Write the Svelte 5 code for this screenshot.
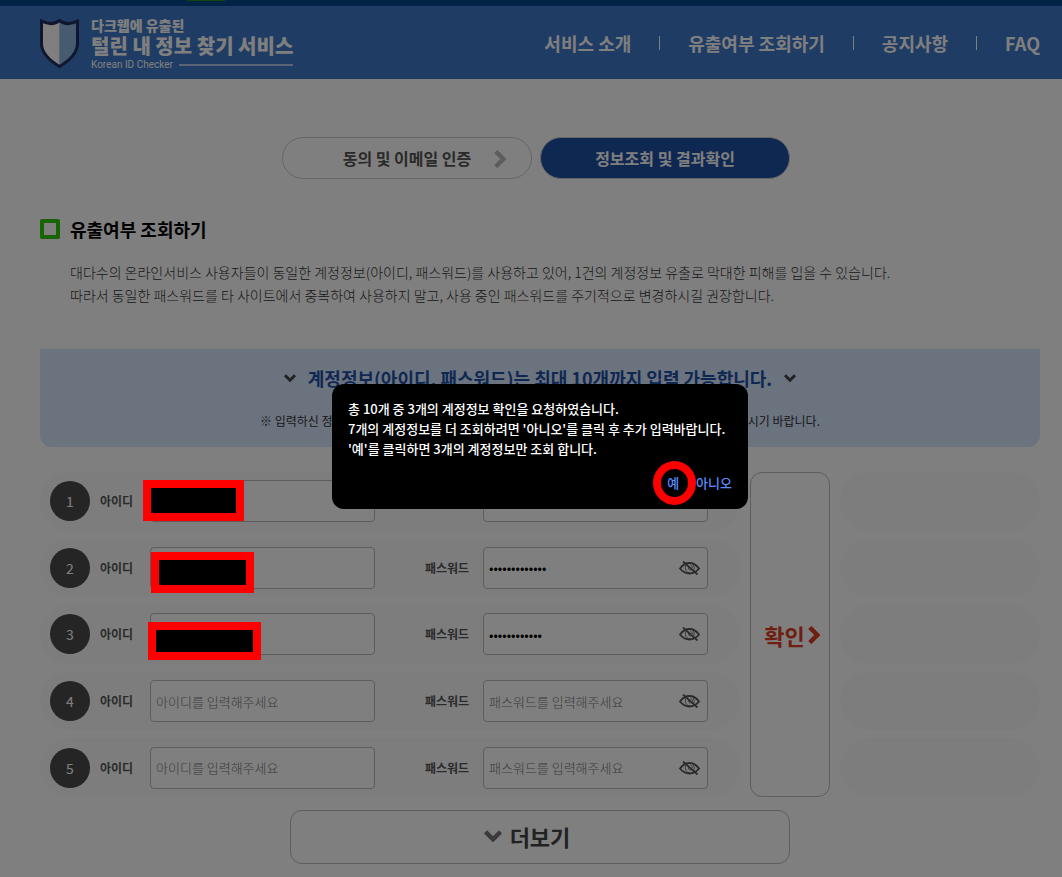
<script lang="ts">
    interface Account {
        no: number;
        id: string;
        password: string;
    }

    interface Mark {
        x: number;
        y: number;
        width: number;
        height: number;
    }

    const menu = ['서비스 소개', '유출여부 조회하기', '공지사항', 'FAQ'];

    let accounts: Account[] = $state([
        { no: 1, id: '', password: '' },
        { no: 2, id: '', password: 'abcdefghijklm' },
        { no: 3, id: '', password: 'abcdefghijkl' },
        { no: 4, id: '', password: '' },
        { no: 5, id: '', password: '' }
    ]);

    let shown: Record<number, boolean> = $state({});
    let dialogOpen = $state(true);

    // masks over the personal ids, measured from the form's top left corner
    const marks: Mark[] = [
        { x: 103, y: 8, width: 101, height: 41 },
        { x: 111, y: 80, width: 103, height: 41 },
        { x: 108, y: 150, width: 113, height: 38 }
    ];
</script>

{#snippet chevron(name: string)}
    <svg class="chevron {name}" viewBox="0 0 12 8" aria-hidden="true">
        <path d="M1 1.2 L6 6.2 L11 1.2" />
    </svg>
{/snippet}

<div class="page">
    <div class="topbar"><span class="topbar-tab"></span></div>
    <header>
        <a class="logo" href="#home">
            <svg class="shield" viewBox="0 0 39 49" aria-hidden="true">
                <path class="right" d="M19.500 2 Q28 8 37 3 V25 Q36 38 19.500 47 Z" />
                <path class="left" d="M19.500 2 Q11 8 2 3 V25 Q3 38 19.500 47 Z" />
                <path class="edge" d="M1.500 2 Q12 7.500 19.500 1.500 Q27 7.500 37.500 2 V25 Q37 37 19.500 47.500 Q2 37 1.500 25 Z" />
            </svg>
            <span class="logo-text">
                <span class="logo-small">다크웹에 유출된</span>
                <span class="logo-big">털린 내 정보 찾기 서비스</span>
                <span class="logo-en">Korean ID Checker</span>
            </span>
        </a>
        <nav>
            {#each menu as item}
                <a href="#menu">{item}</a>
            {/each}
        </nav>
    </header>

    <main>
        <div class="steps">
            <button type="button" class="step">
                동의 및 이메일 인증
                {@render chevron('next')}
            </button>
            <button type="button" class="step current">정보조회 및 결과확인</button>
        </div>

        <h1>유출여부 조회하기</h1>
        <p class="desc">
            대다수의 온라인서비스 사용자들이 동일한 계정정보(아이디, 패스워드)를 사용하고 있어, 1건의 계정정보 유출로 막대한 피해를 입을 수 있습니다.<br />
            따라서 동일한 패스워드를 타 사이트에서 중복하여 사용하지 말고, 사용 중인 패스워드를 주기적으로 변경하시길 권장합니다.
        </p>

        <section class="notice">
            <h2>
                {@render chevron('small')}
                계정정보(아이디, 패스워드)는 최대 10개까지 입력 가능합니다.
                {@render chevron('small')}
            </h2>
            <p><span>※ 입력하신 정보</span><span>하시기 바랍니다.</span></p>
        </section>

        <form onsubmit={(e) => e.preventDefault()}>
            <div class="rows">
                {#each accounts as account (account.no)}
                    <div class="row">
                        <span class="no">{account.no}</span>
                        <label class="id-label" for="id-{account.no}">아이디</label>
                        <input
                            id="id-{account.no}"
                            type="text"
                            placeholder={account.no > 3 ? '아이디를 입력해주세요' : ''}
                            bind:value={account.id}
                        />
                        <label class="pw-label" for="pw-{account.no}">패스워드</label>
                        <div class="pw">
                            <input
                                id="pw-{account.no}"
                                type={shown[account.no] ? 'text' : 'password'}
                                placeholder={account.no > 3 ? '패스워드를 입력해주세요' : ''}
                                bind:value={account.password}
                            />
                            <button
                                type="button"
                                class="eye"
                                aria-label="패스워드 표시"
                                onclick={() => (shown[account.no] = !shown[account.no])}
                            >
                                <svg viewBox="0 0 21 14" aria-hidden="true">
                                    <path d="M1 7.500 Q5 2 10.500 2 Q16 2 20 7.500 Q16 12.500 10.500 12.500 Q5 12.500 1 7.500 Z" />
                                    <path class="iris" d="M7 4 Q5.500 7 7 9.500 Q8.500 12 11 12 M9.500 6 Q9 8.500 11.500 9.500 M11.500 4 Q13.500 5 13.500 7 M14 3.500 Q15.800 6 15 9" />
                                    <path d="M4 0.500 L18.500 13.500" />
                                </svg>
                            </button>
                        </div>
                    </div>
                {/each}
            </div>
            <button type="submit" class="confirm">
                확인
                {@render chevron('go')}
            </button>
            <div class="rows">
                {#each accounts as account (account.no)}
                    <div class="result"></div>
                {/each}
            </div>

            {#each marks as mark}
                <span
                    class="mark"
                    style="left: {mark.x}px; top: {mark.y}px; width: {mark.width}px; height: {mark.height}px"
                ></span>
            {/each}
        </form>

        <button type="button" class="more">
            {@render chevron('large')}
            더보기
        </button>

        {#if dialogOpen}
            <div class="dialog" role="alertdialog" aria-modal="true">
                <p>
                    총 10개 중 3개의 계정정보 확인을 요청하였습니다.<br />
                    7개의 계정정보를 더 조회하려면 '아니오'를 클릭 후 추가 입력바랍니다.<br />
                    '예'를 클릭하면 3개의 계정정보만 조회 합니다.
                </p>
                <div class="answers">
                    <button type="button" class="yes" onclick={() => (dialogOpen = false)}>예</button>
                    <button type="button" onclick={() => (dialogOpen = false)}>아니오</button>
                </div>
            </div>
        {/if}
    </main>

    {#if dialogOpen}
        <div class="backdrop"></div>
    {/if}
</div>

<style>
    :global(body) {
        margin: 0;
        background: #fff;
    }

    .page,
    .page button,
    .page input {
        font-family: "Noto Sans CJK KR", "Noto Sans", sans-serif;
    }

    .page {
        position: relative;
        min-height: 100vh;
        color: #000;
    }

    .page *,
    .page *::before,
    .page *::after {
        box-sizing: border-box;
    }

    button {
        padding: 0;
        border: 0;
        background: none;
        cursor: pointer;
    }

    .backdrop {
        position: fixed;
        inset: 0;
        background: rgba(0, 0, 0, 0.5);
        z-index: 1;
    }

    .topbar {
        height: 6px;
        padding-left: 187px;
        background: #00468c;
    }

    .topbar-tab {
        display: block;
        width: 38px;
        height: 1px;
        background: #1e8c1e;
    }

    header {
        display: flex;
        justify-content: space-between;
        align-items: center;
        height: 73px;
        padding: 0 22px 0 40px;
        background: #3e78c8;
    }

    .logo {
        display: flex;
        align-items: center;
        gap: 12px;
        margin-top: 2px;
        color: #fff;
        text-decoration: none;
    }

    .shield {
        width: 39px;
        height: 49px;
    }

    .shield .left {
        fill: #fff;
    }

    .shield .right {
        fill: #8cb4e0;
    }

    .shield .edge {
        fill: none;
        stroke: #1e2d5a;
        stroke-width: 3;
    }

    .logo-text {
        display: flex;
        flex-direction: column;
        font-weight: 900;
    }

    .logo-small {
        font-size: 14px;
        line-height: 18px;
    }

    .logo-big {
        font-size: 20px;
        line-height: 24px;
    }

    .logo-en {
        display: flex;
        align-items: center;
        gap: 6px;
        font: 10px/14px Roboto, sans-serif;
    }

    .logo-en::after {
        content: '';
        flex: 1;
        height: 2px;
        background: #b4c8e8;
    }

    nav {
        display: flex;
    }

    nav a {
        display: flex;
        align-items: center;
        color: #fff;
        font-size: 18px;
        font-weight: 700;
        line-height: 26px;
        text-decoration: none;
    }

    nav a + a::before {
        content: '';
        width: 1px;
        height: 14px;
        margin: 0 28px;
        background: #fff;
    }

    main {
        position: relative;
        padding: 58px 22px 12px 40px;
    }

    .chevron {
        fill: none;
        stroke: currentColor;
        stroke-width: 3;
    }

    .steps {
        display: flex;
        justify-content: center;
        gap: 8px;
        padding-right: 8px;
    }

    .step {
        position: relative;
        width: 250px;
        height: 42px;
        border: 1px solid #ccc;
        border-radius: 21px;
        color: #555;
        font-size: 16px;
        font-weight: 700;
    }

    .step.current {
        background: #1e50a5;
        color: #fff;
    }

    .next {
        position: absolute;
        top: 15px;
        right: 22px;
        width: 18px;
        height: 12px;
        color: #bbb;
        transform: rotate(-90deg);
    }

    h1 {
        display: flex;
        align-items: center;
        gap: 10px;
        margin: 36px 0 0;
        font-size: 18px;
        font-weight: 700;
        line-height: 28px;
    }

    h1::before {
        content: '';
        width: 20px;
        height: 20px;
        border: 4px solid #30c800;
        border-radius: 2px;
    }

    .desc {
        margin: 18px 0 0 30px;
        color: #333;
        font-size: 14px;
        font-weight: 300;
        line-height: 23px;
    }

    .notice {
        margin-top: 42px;
        padding: 16px 0;
        border-radius: 0 0 12px 12px;
        background: #d6e6ff;
    }

    .notice h2 {
        display: flex;
        justify-content: center;
        align-items: center;
        gap: 12px;
        margin: 0;
        color: #1e50a5;
        font-size: 18px;
        font-weight: 700;
        line-height: 26px;
    }

    .small {
        width: 12px;
        height: 8px;
        color: #444;
    }

    .notice p {
        display: flex;
        justify-content: space-between;
        width: 560px;
        margin: 20px auto 0;
        color: #333;
        font-size: 12px;
        line-height: 20px;
    }

    form {
        position: relative;
        display: grid;
        grid-template-columns: 1fr 80px 200px;
        gap: 10px;
        min-height: 325px;
        margin-top: 25px;
    }

    .rows {
        display: grid;
        grid-auto-rows: 1fr;
        gap: 8px;
    }

    .row {
        display: flex;
        align-items: center;
        padding: 0 32px 0 10px;
        border-radius: 30px;
        background: #fafafa;
    }

    .result {
        border-radius: 30px;
        background: #fafafa;
    }

    .no {
        width: 40px;
        height: 40px;
        border-radius: 50%;
        background: #4a4a4a;
        color: #fff;
        font-size: 14px;
        line-height: 40px;
        text-align: center;
    }

    label {
        color: #555;
        font-size: 12px;
        font-weight: 700;
        line-height: 18px;
    }

    .id-label {
        width: 50px;
        margin-left: 10px;
    }

    .pw-label {
        width: 58px;
        margin-left: 50px;
    }

    input {
        width: 225px;
        height: 42px;
        padding: 0 5px;
        border: 1px solid #bbb;
        border-radius: 4px;
        background: #fff;
        color: #000;
        font-size: 13px;
    }

    input::placeholder {
        color: #777;
        font-weight: 300;
    }

    .pw {
        position: relative;
    }

    .eye {
        position: absolute;
        top: 14px;
        right: 8px;
        width: 21px;
        height: 14px;
    }

    .eye svg {
        display: block;
        width: 21px;
        height: 14px;
        fill: none;
        stroke: #555;
        stroke-width: 1.8;
    }

    .eye .iris {
        stroke-width: 0.8;
    }

    .confirm {
        display: flex;
        justify-content: center;
        align-items: center;
        padding-left: 7px;
        border: 1px solid #bbb;
        border-radius: 12px;
        color: #e03c1e;
        font-size: 22px;
        font-weight: 700;
    }

    .go {
        width: 18px;
        height: 12px;
        transform: rotate(-90deg);
    }

    .more {
        display: flex;
        justify-content: center;
        align-items: center;
        gap: 8px;
        width: 50%;
        height: 54px;
        margin: 13px auto 0;
        padding: 0 26px 2px 0;
        border: 1px solid #bbb;
        border-radius: 12px;
        color: #444;
        font-size: 22px;
        font-weight: 700;
    }

    .large {
        width: 18px;
        height: 12px;
        color: #777;
    }

    .mark {
        position: absolute;
        border: 8px solid #f00;
        background: #000;
        z-index: 2;
    }

    .dialog {
        position: absolute;
        top: 305px;
        left: 332px;
        width: 416px;
        padding: 15px 16px;
        border-radius: 12px;
        background: #000;
        color: #fff;
        font-size: 13px;
        font-weight: 500;
        line-height: 20px;
        z-index: 3;
    }

    .dialog p {
        margin: 0;
    }

    .answers {
        display: flex;
        justify-content: flex-end;
        gap: 17px;
        margin: 14px 0 1px;
    }

    .answers button {
        color: #5a8cff;
        font-size: 13px;
        font-weight: 500;
        line-height: 20px;
    }

    .yes {
        position: relative;
    }

    .yes::after {
        content: '';
        position: absolute;
        top: -12px;
        left: -14px;
        width: 43px;
        height: 44px;
        border: 8px solid #f00;
        border-radius: 50%;
    }
</style>
